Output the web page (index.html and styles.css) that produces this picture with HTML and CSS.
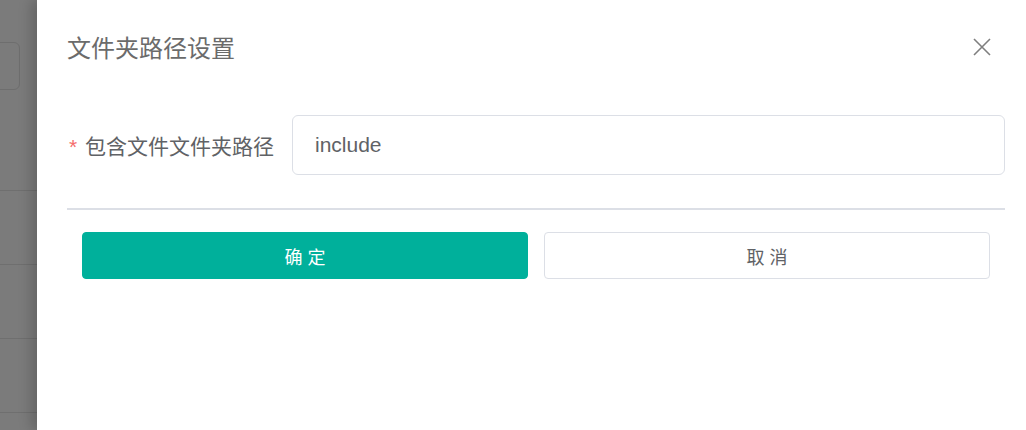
FILE: index.html
```html
<!DOCTYPE html>
<html lang="zh-CN">
<head>
<meta charset="utf-8">
<title>文件夹路径设置</title>
<link rel="stylesheet" href="styles.css">
</head>
<body>
<div class="screen">
  <div class="backdrop">
    <div class="bg-input"></div>
    <div class="bg-rows">
      <div class="bg-row"></div>
      <div class="bg-row"></div>
      <div class="bg-row"></div>
      <div class="bg-row"></div>
    </div>
  </div>
  <div class="drawer">
    <div class="drawer-header">
      <span class="drawer-title">文件夹路径设置</span>
      <button class="close-btn" aria-label="关闭">
        <svg width="18" height="18" viewBox="0 0 18 18"><path d="M1 1 L17 17 M17 1 L1 17" stroke="#7f7f7f" stroke-width="1.6" fill="none"/></svg>
      </button>
    </div>
    <div class="form-row">
      <label class="form-label"><span class="required">*</span> 包含文件文件夹路径</label>
      <div class="input-box">include</div>
    </div>
    <div class="divider"></div>
    <div class="actions">
      <button class="btn btn-primary">确 定</button>
      <button class="btn btn-default">取 消</button>
    </div>
  </div>
</div>
</body>
</html>
```

FILE: styles.css
```css
html, body {
  margin: 0;
  padding: 0;
  background: #ffffff;
}

body {
  font-family: "Liberation Sans", "Noto Sans CJK SC", sans-serif;
}

.screen {
  display: flex;
  width: 1026px;
  height: 430px;
  overflow: hidden;
}

.backdrop {
  width: 37px;
  flex: none;
  background: #7b7b7b;
  display: flex;
  flex-direction: column;
  overflow: hidden;
}

.bg-input {
  margin-top: 42px;
  margin-left: -20px;
  width: 38px;
  height: 46px;
  border: 1px solid #6e6e6e;
  border-radius: 6px;
  flex: none;
}

.bg-rows {
  padding-top: 100px;
  display: flex;
  flex-direction: column;
}

.bg-row {
  height: 73px;
  border-top: 1px solid #6f6f6f;
  flex: none;
}

.drawer {
  flex: 1;
  background: #ffffff;
  box-shadow: -6px 0 12px rgba(0, 0, 0, 0.18);
  padding: 0 21px 0 30px;
  display: flex;
  flex-direction: column;
}

.drawer-header {
  margin-top: 24px;
  height: 50px;
  display: flex;
  align-items: center;
  justify-content: space-between;
}

.drawer-title {
  font-size: 24px;
  color: #6b6b6b;
  line-height: 50px;
}

.close-btn {
  border: none;
  background: none;
  padding: 0;
  margin-right: 14px;
  margin-top: -4px;
  width: 18px;
  height: 18px;
  display: flex;
  cursor: pointer;
}

.form-row {
  margin-top: 41px;
  display: flex;
  align-items: center;
}

.form-label {
  width: 225px;
  flex: none;
  box-sizing: border-box;
  padding-right: 18px;
  text-align: right;
  font-size: 21px;
  color: #606266;
}

.required {
  color: #f56c6c;
  margin-right: 2px;
}

.input-box {
  flex: 1;
  height: 60px;
  box-sizing: border-box;
  border: 1px solid #dcdfe6;
  border-radius: 6px;
  padding-left: 22px;
  display: flex;
  align-items: center;
  font-size: 21px;
  color: #606266;
}

.divider {
  margin-top: 33px;
  height: 2px;
  background: #dcdfe6;
}

.actions {
  margin-top: 22px;
  padding: 0 15px;
  display: flex;
  gap: 16px;
}

.btn {
  flex: 1;
  height: 47px;
  border-radius: 4px;
  font-family: "Liberation Sans", "Noto Sans CJK SC", sans-serif;
  font-size: 18px;
  cursor: pointer;
}

.btn-primary {
  background: #00b09b;
  border: 1px solid #00b09b;
  color: #ffffff;
}

.btn-default {
  background: #ffffff;
  border: 1px solid #dcdfe6;
  color: #606266;
}
```
